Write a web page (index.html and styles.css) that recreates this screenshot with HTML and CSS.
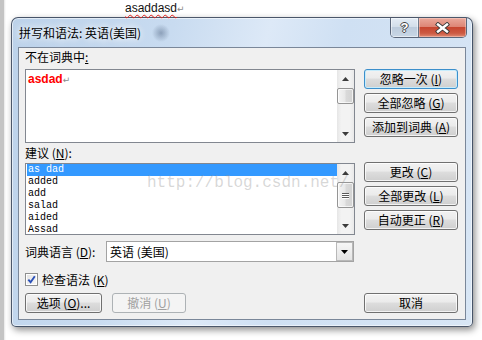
FILE: index.html
```html
<!DOCTYPE html>
<html lang="zh-CN">
<head>
  <meta charset="UTF-8" />
  <title>拼写和语法</title>
  <link rel="stylesheet" href="styles.css">
</head>
<body>
  <div class="doc">
    <span class="word">asaddasd</span><span class="para">↵</span>
  </div>

  <div class="window">
    <div class="titlebar">
      <span class="title">拼写和语法: 英语(美国)</span>
      <div class="caption-btns">
        <div class="cap help"><span class="qmark">?</span></div>
        <div class="cap close">
          <svg width="15" height="12" viewBox="0 0 15 12">
            <path d="M3 2.5 L12 9.5 M12 2.5 L3 9.5" stroke="#3a3a3a" stroke-width="4.2" stroke-linecap="square" fill="none"/>
            <path d="M3 2.5 L12 9.5 M12 2.5 L3 9.5" stroke="#fff" stroke-width="2.4" stroke-linecap="square" fill="none"/>
          </svg>
        </div>
      </div>
    </div>

    <div class="client">
      <div class="left">
        <div class="label first">不在词典中<u>:</u></div>
        <div class="textbox">
          <div class="tb-text"><span class="bad">asdad</span><span class="pm">↵</span></div>
          <div class="vscroll">
            <div class="arrow"><svg width="7" height="4" viewBox="0 0 7 4"><path d="M0 4 L3.5 0 L7 4 Z" fill="#3c3c3c"/></svg></div>
            <div class="thumb small"></div>
            <div class="track"></div>
            <div class="arrow"><svg width="7" height="4" viewBox="0 0 7 4"><path d="M0 0 L7 0 L3.5 4 Z" fill="#3c3c3c"/></svg></div>
          </div>
        </div>

        <div class="label second">建议 (<u>N</u>):</div>
        <div class="listbox">
          <ul class="items">
            <li class="selected">as dad</li>
            <li>added</li>
            <li>add</li>
            <li>salad</li>
            <li>aided</li>
            <li>Assad</li>
          </ul>
          <div class="vscroll">
            <div class="arrow"><svg width="7" height="4" viewBox="0 0 7 4"><path d="M0 4 L3.5 0 L7 4 Z" fill="#3c3c3c"/></svg></div>
            <div class="track short"></div>
            <div class="thumb grip"><span></span><span></span><span></span></div>
            <div class="track"></div>
            <div class="arrow"><svg width="7" height="4" viewBox="0 0 7 4"><path d="M0 0 L7 0 L3.5 4 Z" fill="#3c3c3c"/></svg></div>
          </div>
        </div>

        <div class="langrow">
          <span class="langlabel">词典语言 (<u>D</u>):</span>
          <div class="select">
            <span class="sel-text">英语 (美国)</span>
            <span class="drop"><svg width="7" height="4" viewBox="0 0 7 4"><path d="M0 0 L7 0 L3.5 4 Z" fill="#000"/></svg></span>
          </div>
        </div>

        <div class="check">
          <span class="box"><svg width="9" height="9" viewBox="0 0 9 9"><path d="M1.3 4.6 L3.6 7.2 L7.8 1.2" stroke="#2a50b8" stroke-width="1.9" fill="none"/></svg></span>
          <span>检查语法 (<u>K</u>)</span>
        </div>

        <div class="btnrow">
          <button class="btn opt">选项 (<u>O</u>)...</button>
          <button class="btn undo" disabled>撤消 (<u>U</u>)</button>
        </div>
      </div>

      <div class="right">
        <button class="btn default first">忽略一次 (<u>I</u>)</button>
        <button class="btn">全部忽略 (<u>G</u>)</button>
        <button class="btn">添加到词典 (<u>A</u>)</button>
        <button class="btn group">更改 (<u>C</u>)</button>
        <button class="btn">全部更改 (<u>L</u>)</button>
        <button class="btn">自动更正 (<u>R</u>)</button>
        <button class="btn cancel">取消</button>
      </div>
    </div>
  </div>

  <div class="watermark">http://blog.csdn.net/</div>
</body>
</html>
```

FILE: styles.css
```css
* {
  box-sizing: border-box;
}

body {
  margin: 0;
  width: 482px;
  height: 340px;
  overflow: hidden;
  position: relative;
  background: linear-gradient(to right, #c4c4c4 0, #c4c4c4 4px, #e6e6e6 4px, #fff 6px);
  font-family: "Noto Sans CJK SC", sans-serif;
  font-size: 12px;
  color: #000;
}

.doc {
  height: 17px;
  padding: 1px 0 0 125px;
  font: 12px/14px "Liberation Sans", sans-serif;
  color: #111;
}

.word {
  text-decoration: underline wavy #e0201a;
  text-decoration-thickness: 1px;
  text-underline-offset: 2px;
}

.para {
  font: 9px "DejaVu Sans", sans-serif;
  color: #8a8a8a;
}

/* window frame */
.window {
  margin-left: 11px;
  width: 462px;
  height: 310px;
  border: 1px solid rgba(30, 40, 60, 0.75);
  border-radius: 7px 7px 5px 5px;
  padding: 0 6px 6px;
  background:
    radial-gradient(ellipse 9px 9px at 149px 15px, rgba(70, 90, 120, 0.45), rgba(70, 90, 120, 0)),
    linear-gradient(105deg, #bcd2ea 0%, #c8dbf0 30%, #dde9f7 48%, #cfe0f3 62%, #d8e6f5 100%);
  box-shadow: inset 0 0 0 1px rgba(255, 255, 255, 0.55), 2px 3px 7px rgba(0, 0, 0, 0.45);
}

.titlebar {
  height: 29px;
  display: flex;
  justify-content: space-between;
  align-items: flex-start;
}

.title {
  padding: 7px 0 0 1px;
  line-height: 16px;
  font-size: 12px;
  color: #000;
  text-shadow: 0 0 6px #fff, 0 0 10px rgba(255, 255, 255, 0.9);
}

.caption-btns {
  display: flex;
  margin-right: -1px;
  border: 1px solid rgba(40, 50, 70, 0.7);
  border-top: none;
  border-radius: 0 0 5px 5px;
  overflow: hidden;
  height: 20px;
}

.cap {
  display: flex;
  align-items: center;
  justify-content: center;
  height: 100%;
}

.help {
  width: 28px;
  border-right: 1px solid rgba(40, 50, 70, 0.6);
  background: linear-gradient(#e4ecf5, #d3deea 45%, #bccbdc 50%, #c9d7e6);
  box-shadow: inset 0 0 0 1px rgba(255, 255, 255, 0.5);
}

.qmark {
  font: bold 13px/13px "Liberation Sans", sans-serif;
  color: #fff;
  text-shadow: 1px 0 #444, -1px 0 #444, 0 1px #444, 0 -1px #444;
}

.close {
  width: 47px;
  background: linear-gradient(#eaa99c, #de8676 45%, #c74630 50%, #cc5a43 80%, #e08b74);
  box-shadow: inset 0 0 0 1px rgba(255, 220, 210, 0.45);
}

/* client area */
.client {
  height: 273px;
  border: 1px solid #7a8799;
  background: #f0f0f0;
  padding: 1px 7px 0 6px;
  display: flex;
  gap: 9px;
}

.left {
  width: 330px;
  display: flex;
  flex-direction: column;
}

.label {
  height: 16px;
  line-height: 16px;
}

.label.first {
  margin-bottom: 4px;
}

.label.second {
  margin: 2px 0;
}

.textbox,
.listbox {
  display: flex;
  border: 1px solid #828790;
  background: #fff;
}

.textbox {
  height: 74px;
}

.listbox {
  height: 72px;
}

.tb-text {
  flex: 1;
  padding: 2px;
  font: bold 12px/14px "Liberation Sans", sans-serif;
}

.bad {
  color: #ff0000;
}

.pm {
  font: 9px "DejaVu Sans", sans-serif;
  color: #8a8a8a;
}

.vscroll {
  width: 17px;
  display: flex;
  flex-direction: column;
  background: linear-gradient(to right, #e6e6e6, #f3f3f3 25%, #f3f3f3 75%, #e9e9e9);
}

.arrow {
  height: 17px;
  display: flex;
  align-items: center;
  justify-content: center;
}

.track {
  flex: 1;
}

.track.short {
  flex: 0 0 1px;
}

.thumb {
  border: 1px solid #959595;
  border-radius: 2px;
  background: linear-gradient(to right, #f4f4f4, #e8e8e8 45%, #d9d9d9 55%, #d2d2d2);
  box-shadow: inset 0 0 0 1px rgba(255, 255, 255, 0.7);
}

.thumb.small {
  height: 16px;
  margin-top: 1px;
}

.thumb.grip {
  height: 26px;
  display: flex;
  flex-direction: column;
  align-items: center;
  justify-content: center;
  gap: 1px;
}

.thumb.grip span {
  width: 7px;
  height: 1px;
  background: #5a5a5a;
  box-shadow: 0 1px #fff;
}

.items {
  flex: 1;
  list-style: none;
  margin: 0;
  padding: 0;
  font: 10px/12px "Liberation Mono", monospace;
}

.items li {
  margin-left: 1px;
  padding-left: 1px;
  height: 12px;
}

.items li.selected {
  background: #3399ff;
  color: #fff;
}

.langrow {
  height: 21px;
  margin-top: 6px;
  display: flex;
  align-items: center;
}

.langlabel {
  width: 81px;
}

.select {
  width: 248px;
  height: 21px;
  display: flex;
  align-items: center;
  justify-content: space-between;
  border: 1px solid #a3a3a3;
  background: #fff;
}

.sel-text {
  padding-left: 3px;
}

.drop {
  width: 17px;
  height: 19px;
  display: flex;
  align-items: center;
  justify-content: center;
  border: 1px solid #b8b8b8;
  background: linear-gradient(#f6f6f6, #e4e4e4);
}

.check {
  height: 16px;
  margin-top: 9px;
  display: flex;
  align-items: center;
  gap: 4px;
}

.box {
  width: 13px;
  height: 13px;
  display: flex;
  align-items: center;
  justify-content: center;
  border: 1px solid #8e8f8f;
  background: linear-gradient(135deg, #e3e3e3, #f8f8f8);
  box-shadow: inset 0 0 0 1px #fff;
}

.btnrow {
  margin-top: 6px;
  display: flex;
  gap: 10px;
}

/* buttons */
.btn {
  height: 20px;
  padding: 0;
  border: 1px solid #707070;
  border-radius: 3px;
  background: linear-gradient(#f2f2f2, #ebebeb 45%, #dddddd 50%, #cfcfcf);
  box-shadow: inset 0 0 0 1px rgba(255, 255, 255, 0.75);
  font: 12px/18px "Noto Sans CJK SC", sans-serif;
  color: #000;
  white-space: nowrap;
}

.btn.opt {
  width: 77px;
}

.btn.undo {
  width: 74px;
  border-color: #adb2b5;
  background: #f4f4f4;
  box-shadow: none;
  color: #a0a0a0;
}

.right {
  width: 94px;
  display: flex;
  flex-direction: column;
  gap: 4px;
}

.right .btn.first {
  margin-top: 20px;
}

.right .btn.group {
  margin-top: 21px;
}

.right .btn.cancel {
  margin-top: 59px;
}

.btn.default {
  border-color: #3c8fcb;
  box-shadow: inset 0 0 0 1px #c6ecfc;
}

.watermark {
  position: absolute;
  left: 147px;
  top: 174px;
  font: 16px/18px "Liberation Mono", monospace;
  color: rgba(150, 150, 150, 0.38);
  pointer-events: none;
}
```
